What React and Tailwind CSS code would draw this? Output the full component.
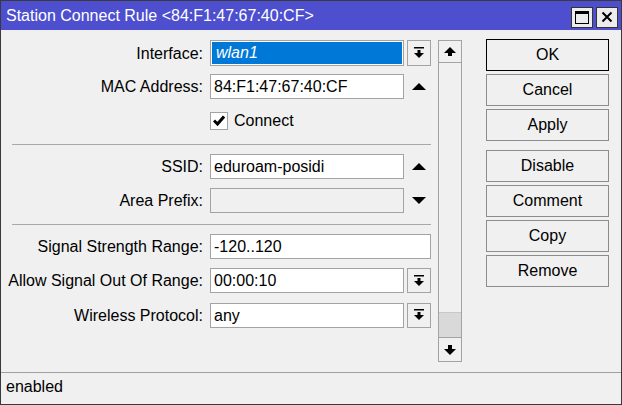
const DropIcon = () => (
  <svg width="12" height="12" viewBox="0 0 12 12">
    <rect x="1" y="0" width="10" height="1.5" fill="#000" />
    <rect x="4.5" y="3" width="3" height="3.5" fill="#000" />
    <polygon points="1,6 11,6 6,11" fill="#000" />
  </svg>
);

const TriUp = () => (
  <svg width="14" height="7" viewBox="0 0 14 7">
    <polygon points="0,7 14,7 7,0" fill="#000" />
  </svg>
);

const TriDown = () => (
  <svg width="14" height="7" viewBox="0 0 14 7">
    <polygon points="0,0 14,0 7,7" fill="#000" />
  </svg>
);

const Label = ({ children }) => (
  <div className="w-[192px] shrink-0 flex justify-end whitespace-nowrap pr-[1px] pt-[1px] leading-none">{children}</div>
);

const Field = ({ value, disabled }) => (
  <div
    className={`w-[194px] h-[25px] border border-[#a3a3a3] flex items-center pl-[3px] pt-[1px] ${
      disabled ? "bg-[#f0f0f0]" : "bg-white"
    }`}
  >
    {value}
  </div>
);

const DropButton = () => (
  <div className="ml-[3px] w-[24px] h-[25px] border border-[#a3a3a3] bg-[#f0f0f0] flex items-center justify-center">
    <DropIcon />
  </div>
);

const Side = ({ children }) => (
  <div className="ml-[3px] w-[24px] h-[25px] flex items-center justify-center">{children}</div>
);

const Row = ({ label, children, className = "" }) => (
  <div className={`flex items-center gap-[6px] h-[25px] ${className}`}>
    <Label>{label}</Label>
    <div className="flex items-center">{children}</div>
  </div>
);

const Btn = ({ children, primary, className = "" }) => (
  <div
    className={`h-[32px] flex items-center justify-center border bg-[#f0f0f0] ${
      primary ? "border-black" : "border-[#8c8c8c]"
    } ${className}`}
  >
    {children}
  </div>
);

export default function App() {
  return (
    <div className="w-[622px] h-[405px] border border-[#3a3a3a] bg-[#f0f0f0] flex flex-col text-[16px] text-black font-['Liberation_Sans',Arial,sans-serif]">
      {/* title bar */}
      <div className="h-[29px] shrink-0 bg-[#4d4fce] flex items-center pl-[5px] pr-[3px]">
        <span className="text-white">Station Connect Rule &lt;84:F1:47:67:40:CF&gt;</span>
        <div className="ml-auto flex gap-[3px] mt-[3px]">
          <div className="w-[22px] h-[21px] bg-[#ececec] border border-[#333] flex items-center justify-center">
            <div className="w-[14px] h-[13px] border border-black border-t-[3px]" />
          </div>
          <div className="w-[22px] h-[21px] bg-[#ececec] border border-[#333] flex items-center justify-center">
            <svg width="12" height="12" viewBox="0 0 12 12">
              <path d="M1.5 1.5 L10.5 10.5 M10.5 1.5 L1.5 10.5" stroke="#000" strokeWidth="2" />
            </svg>
          </div>
        </div>
      </div>

      {/* body */}
      <div className="flex-1 flex">
        <div className="ml-[11px] w-[419px] pt-[10px] flex flex-col">
          <Row label="Interface:" className="h-[26px]">
            <div className="w-[194px] h-[26px] border border-[#a3a3a3] bg-white p-[1px]">
              <div className="h-full bg-[#0078d7] text-white italic flex items-center pl-[4px]">wlan1</div>
            </div>
            <div className="ml-[3px] w-[24px] h-[26px] border border-[#a3a3a3] bg-[#f0f0f0] flex items-center justify-center">
              <DropIcon />
            </div>
          </Row>
          <Row label="MAC Address:" className="mt-[8px]">
            <Field value="84:F1:47:67:40:CF" />
            <Side>
              <TriUp />
            </Side>
          </Row>
          <Row label="" className="mt-[9px]">
            <div className="flex items-center gap-[6px]">
              <div className="w-[18px] h-[18px] bg-white border border-[#a3a3a3] flex items-center justify-center">
                <svg width="12" height="11" viewBox="0 0 12 11">
                  <path d="M1 5.5 L4.5 9 L11 1.5" stroke="#000" strokeWidth="3" fill="none" />
                </svg>
              </div>
              <span className="pt-[1px]">Connect</span>
            </div>
          </Row>
          <div className="mt-[11px] h-px bg-[#a8a8a8]" />
          <Row label="SSID:" className="mt-[9px]">
            <Field value="eduroam-posidi" />
            <Side>
              <TriUp />
            </Side>
          </Row>
          <Row label="Area Prefix:" className="mt-[9px]">
            <Field value="" disabled />
            <Side>
              <TriDown />
            </Side>
          </Row>
          <div className="mt-[11px] h-px bg-[#a8a8a8]" />
          <Row label="Signal Strength Range:" className="mt-[9px]">
            <div className="w-[221px] h-[25px] border border-[#a3a3a3] bg-white flex items-center pl-[3px] pt-[1px]">-120..120</div>
          </Row>
          <Row label="Allow Signal Out Of Range:" className="mt-[9px]">
            <Field value="00:00:10" />
            <DropButton />
          </Row>
          <Row label="Wireless Protocol:" className="mt-[9px] h-[26px]">
            <Field value="any" />
            <DropButton />
          </Row>
        </div>

        {/* scrollbar */}
        <div className="ml-[7px] mt-[10px] w-[24px] h-[322px] border border-[#a3a3a3] flex flex-col">
          <div className="h-[22px] border-b border-[#a3a3a3] flex items-center justify-center">
            <svg width="12" height="10" viewBox="0 0 12 10">
              <polygon points="6,0 12,6 0,6" fill="#000" />
              <rect x="4" y="6" width="4" height="3" fill="#000" />
            </svg>
          </div>
          <div className="flex-1" />
          <div className="h-[25px] bg-[#d9d9d9] border-t border-[#c8c8c8]" />
          <div className="h-[24px] border-t border-[#a3a3a3] flex items-center justify-center">
            <svg width="12" height="10" viewBox="0 0 12 10">
              <rect x="4" y="0" width="4" height="4" fill="#000" />
              <polygon points="0,4 12,4 6,10" fill="#000" />
            </svg>
          </div>
        </div>

        {/* buttons */}
        <div className="ml-[24px] mt-[9px] w-[123px] flex flex-col gap-[3px]">
          <Btn primary>OK</Btn>
          <Btn>Cancel</Btn>
          <Btn>Apply</Btn>
          <Btn className="mt-[6px]">Disable</Btn>
          <Btn>Comment</Btn>
          <Btn>Copy</Btn>
          <Btn>Remove</Btn>
        </div>
      </div>

      {/* status bar */}
      <div className="h-[32px] shrink-0 border-t border-[#a0a0a0] flex items-center pl-[5px] pb-[3px]">enabled</div>
    </div>
  );
}
